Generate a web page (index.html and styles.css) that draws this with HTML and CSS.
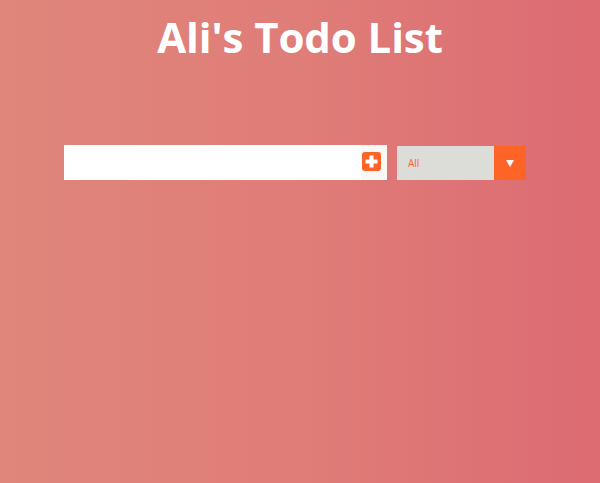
FILE: index.html
```html
<!DOCTYPE html>
<html>
<head>
<meta charset="utf-8">
<link rel="stylesheet" href="styles.css">
</head>
<body>
<header class="header">
  <h1 class="title">Ali's Todo List</h1>
</header>
<form class="todo-form">
  <div class="input-wrap">
    <input class="todo-input" type="text">
    <button class="add-btn" type="button" aria-label="Add">
      <svg width="19" height="19" viewBox="0 0 19 19">
        <rect x="0" y="0" width="19" height="19" rx="3" fill="#ff6427"/>
        <rect x="3.5" y="7.5" width="12" height="4" fill="#fff"/>
        <rect x="7.5" y="3.5" width="4" height="12" fill="#fff"/>
      </svg>
    </button>
  </div>
  <div class="select-wrap">
    <span class="select-value">All</span>
    <span class="select-arrow">
      <svg width="8" height="7" viewBox="0 0 8 7"><path d="M0 0H8L4 7Z" fill="#fff"/></svg>
    </span>
  </div>
</form>
</body>
</html>
```
FILE: styles.css
```css
html, body {
  margin: 0;
  padding: 0;
}
body {
  width: 600px;
  height: 483px;
  background: linear-gradient(90deg, #e0867b 0%, #df7d78 50%, #dc6b72 100%);
  font-family: "Open Sans", "Liberation Sans", sans-serif;
  color: #fff;
  overflow: hidden;
}
.header {
  display: flex;
  justify-content: center;
  padding-top: 9px;
}
.title {
  margin: 0;
  font-size: 42px;
  font-weight: 700;
  line-height: 56px;
  letter-spacing: -0.1px;
}
.todo-form {
  display: flex;
  align-items: flex-start;
  padding-top: 80px;
  padding-left: 64px;
  gap: 10px;
}
.input-wrap {
  display: flex;
  width: 323px;
  height: 35px;
  background: #fff;
}
.todo-input {
  flex: 1;
  border: none;
  outline: none;
  padding: 0 8px;
  font-size: 14px;
  background: #fff;
}
.add-btn {
  width: 26px;
  height: 35px;
  border: none;
  padding: 0 0 2px 1px;
  margin: 0;
  background: #f8f9f6;
  display: flex;
  align-items: center;
  justify-content: flex-start;
}
.add-btn svg {
  display: block;
}
.select-wrap {
  margin-top: 1px;
  display: flex;
  width: 129px;
  height: 34px;
  background: #dcdcd9;
}
.select-value {
  flex: 1;
  display: flex;
  align-items: center;
  padding-left: 11px;
  font-size: 10px;
  color: #ff6427;
}
.select-arrow {
  width: 32px;
  background: #ff6427;
  display: flex;
  align-items: center;
  justify-content: center;
}
.select-arrow svg {
  display: block;
}
```
